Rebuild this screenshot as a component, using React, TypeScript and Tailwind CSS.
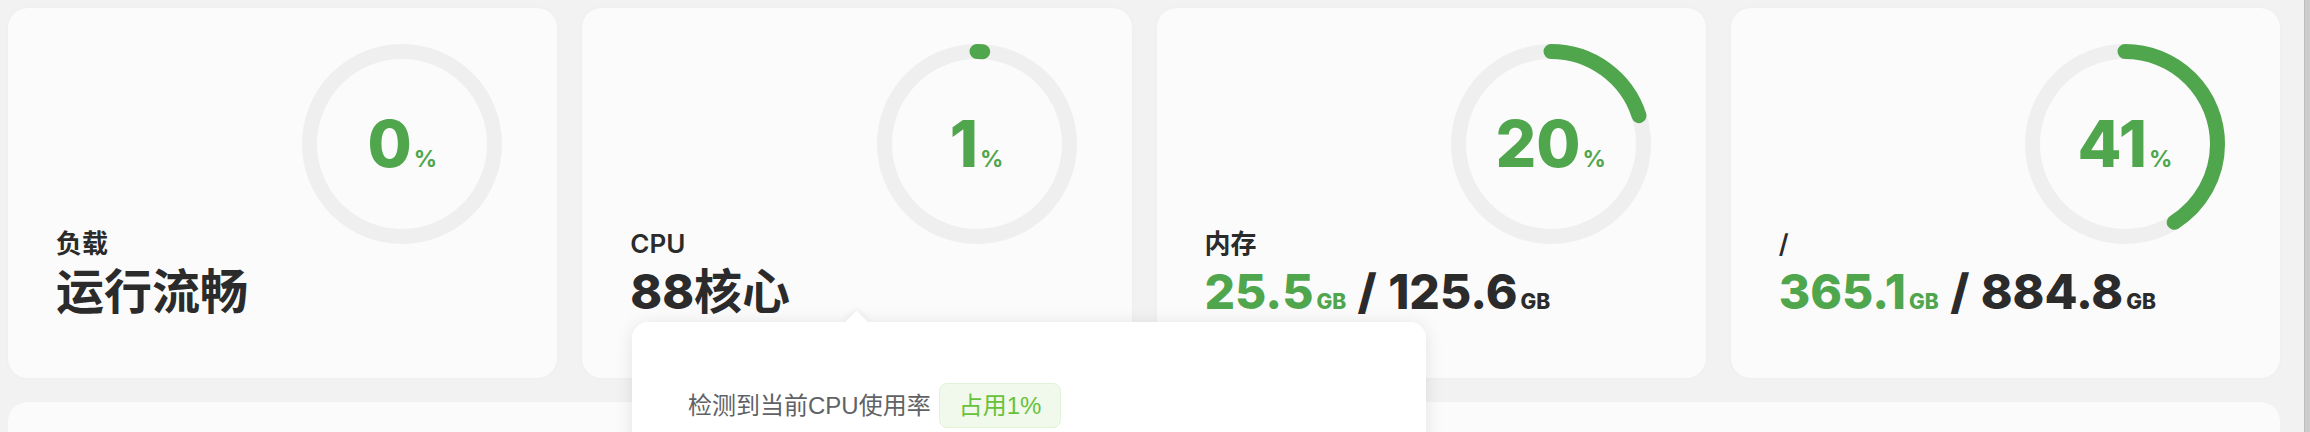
import type { ReactNode } from 'react'

interface StatCardProps {
  label: string
  percent: number
  children: ReactNode
}

const RADIUS = 92.5
const CIRCUMFERENCE = 2 * Math.PI * RADIUS

function Ring({ percent }: { percent: number }) {
  const dash = (CIRCUMFERENCE * percent) / 100
  return (
    <div className="relative h-[200px] w-[200px] shrink-0">
      <svg width="200" height="200" viewBox="0 0 200 200" className="-rotate-90">
        <circle cx="100" cy="100" r={RADIUS} fill="none" stroke="#efefef" strokeWidth="15" />
        {percent > 0 && (
          <circle
            cx="100"
            cy="100"
            r={RADIUS}
            fill="none"
            stroke="#4fa64c"
            strokeWidth="15"
            strokeLinecap="round"
            strokeDasharray={`${dash} ${CIRCUMFERENCE}`}
          />
        )}
      </svg>
      <div className="absolute inset-0 flex items-center justify-center">
        <div className="flex items-baseline text-[#4fa64c]">
          <span className="text-[64px] font-extrabold leading-none">{percent}</span>
          <span className="ml-[2px] text-[23px] font-bold leading-none">%</span>
        </div>
      </div>
    </div>
  )
}

function StatCard({ label, percent, children }: StatCardProps) {
  return (
    <div className="flex flex-col rounded-[20px] bg-[#fbfbfb] pb-[47px] pl-[48px] pr-[55px] pt-[36px] shadow-[0_0_6px_rgba(0,0,0,0.025)]">
      <div className="flex justify-end">
        <Ring percent={percent} />
      </div>
      <div className="-mt-[16px] text-[26px] font-semibold leading-[31px] text-[#2b2b2b]">{label}</div>
      <div className="mt-[4px] whitespace-nowrap text-[48px] font-bold leading-[58px] text-[#2b2b2b]">
        {children}
      </div>
    </div>
  )
}

function Size({ value, green }: { value: string; green?: boolean }) {
  return (
    <span className={green ? 'font-extrabold text-[#4fa64c]' : 'font-extrabold text-[#2b2b2b]'}>
      {value}
      <span className="ml-[3px] text-[21px]">GB</span>
    </span>
  )
}

export default function App() {
  return (
    <div className="flex h-[432px] w-full overflow-hidden bg-[#f2f2f2] font-['Inter','Noto_Sans_CJK_SC',sans-serif]">
      <div className="relative flex-1 pl-[8px] pr-[24px] pt-[8px]">
        <div className="grid grid-cols-4 gap-[25px]">
          <StatCard label="负载" percent={0}>
            运行流畅
          </StatCard>
          <StatCard label="CPU" percent={1}>
            <span className="font-extrabold">88</span>核心
          </StatCard>
          <StatCard label="内存" percent={20}>
            <Size value="25.5" green /> <span className="font-extrabold">/</span> <Size value="125.6" />
          </StatCard>
          <StatCard label="/" percent={41}>
            <Size value="365.1" green /> <span className="font-extrabold">/</span> <Size value="884.8" />
          </StatCard>
        </div>

        <div className="mt-[24px] h-[120px] rounded-t-[20px] bg-[#fbfbfb]" />

        {/* cpu usage popover */}
        <div className="absolute left-[632px] top-[322px] z-10 h-[200px] w-[794px] rounded-[16px] bg-white shadow-[0_2px_18px_rgba(0,0,0,0.1)]">
          <div className="absolute left-[216px] top-[-8px] h-[17px] w-[17px] rotate-45 bg-white shadow-[-2px_-2px_6px_rgba(0,0,0,0.05)]" />
          <div className="relative flex items-center gap-[8px] rounded-[16px] bg-white pl-[56px] pt-[61px] font-['Liberation_Sans','Noto_Sans_CJK_SC',sans-serif]">
            <span className="text-[24px] leading-[45px] text-[#606266]">检测到当前CPU使用率</span>
            <span className="flex h-[45px] items-center rounded-[8px] border border-[#e1f3d8] bg-[#f0f9eb] px-[19px] text-[24px] text-[#67c23a]">
              占用1%
            </span>
          </div>
        </div>
      </div>
      <div className="w-[6px] border-l border-[#bdbdbd] bg-[#cccccc]" />
    </div>
  )
}
